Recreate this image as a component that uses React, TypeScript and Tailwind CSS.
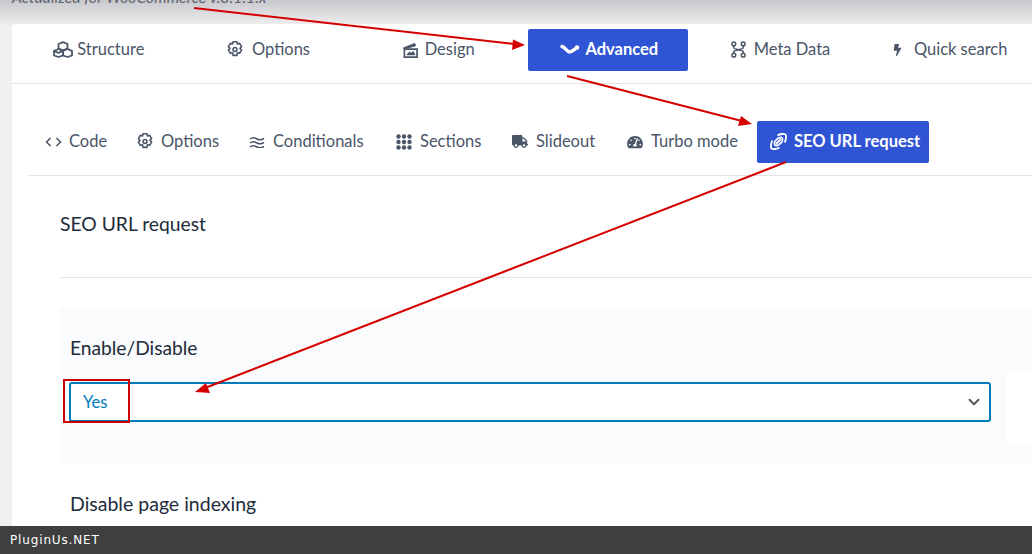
import React from 'react';
import { FaTruck, FaTachometerAlt, FaBolt } from 'react-icons/fa';
import { LuChevronDown } from 'react-icons/lu';

const font = 'font-["Lato","Noto_Sans",sans-serif]';

function CubesIcon() {
  return (
    <svg viewBox="0 0 20 17" className="w-[20px] h-[17px]" fill="none" stroke="currentColor" strokeWidth="1.800" strokeLinejoin="round">
      <path d="M10 1.200 14.500 3v4.500L10 9.300 5.500 7.500V3z" />
      <path d="M5.500 8 10 9.800v4.700L5.500 16 1 14.500V9.800z" />
      <path d="M14.500 8 19 9.800v4.700L14.500 16 10 14.500V9.800z" />
      <path d="M1 10 5.500 11.800 10 10" />
    </svg>
  );
}

function Gear() {
  return (
    <svg viewBox="1.200 0.300 13.600 15" className="w-[16px] h-[17px]" fill="none" stroke="currentColor" strokeWidth="1.400" strokeLinejoin="round">
      <path d="M6.300 1h3.400l.5 2 1.900-.6 1.700 2.900-1.400 1.500 1.400 1.500-1.700 2.900-1.900-.6-.5 2.400H6.300l-.5-2.400-1.900.6-1.700-2.900 1.400-1.500-1.400-1.500 1.700-2.900 1.900.6z" />
      <circle cx="8" cy="7.800" r="1.700" />
    </svg>
  );
}

function DesignIcon() {
  return (
    <svg viewBox="0 0 18 17" className="w-[17px] h-[16px]" fill="none" stroke="currentColor" strokeWidth="1.800">
      <path d="M2.500 7.500V16H16V7.500Z" />
      <path d="M1 6.500 13.500 1.500 14.500 4 2.500 7.500" fill="currentColor" strokeWidth="1" />
      <path d="M5 13l3-3 1.500 1.500L12 9.500l2 3.500v1H5z" fill="currentColor" stroke="none" />
    </svg>
  );
}

function AdvancedIcon() {
  return (
    <svg viewBox="0 0 20 11" className="w-[20px] h-[11px]" fill="none" stroke="currentColor" strokeWidth="3.400" strokeLinecap="round">
      <path d="M2 2.500C5 3 7 8 9.500 8 12 8 14 5.500 16 4.500" />
      <circle cx="17" cy="3.500" r="2.300" fill="currentColor" stroke="none" />
    </svg>
  );
}

function MetaIcon() {
  return (
    <svg viewBox="0 0 16 18" className="w-[15px] h-[17px]" fill="none" stroke="currentColor" strokeWidth="1.600">
      <circle cx="3" cy="3" r="2" />
      <circle cx="13" cy="3" r="2" />
      <circle cx="3" cy="15" r="2" />
      <circle cx="13" cy="15" r="2" />
      <path d="M3 5v2.500c0 1 10 2.500 10 3.500v2M13 5v2.500c0 1-10 2.500-10 3.500v2" />
    </svg>
  );
}

function CodeIcon() {
  return (
    <svg viewBox="0 0 17 10" className="w-[17px] h-[10px]" fill="none" stroke="currentColor" strokeWidth="1.500">
      <path d="M5.500 1 1.500 5l4 4M11.500 1l4 4-4 4" />
    </svg>
  );
}

function WavesIcon() {
  return (
    <svg viewBox="0 0 16 12" className="w-[16px] h-[12px]" fill="none" stroke="currentColor" strokeWidth="1.500">
      <path d="M1 3c2.500-2.500 4.500-1.500 7 0s4.500 1 7-.500M1 7c2.500-2.500 4.500-1.500 7 0s4.500 1 7-.500M1 11c2.500-2.500 4.500-1.500 7 0s4.500 1 7-.500" />
    </svg>
  );
}

function DotsIcon() {
  return (
    <svg viewBox="0 0 16 16" className="w-[16px] h-[16px]" fill="currentColor">
      {[2.5, 8, 13.5].map((y) =>
        [2.5, 8, 13.5].map((x) => <circle key={`${x}-${y}`} cx={x} cy={y} r="2.200" />),
      )}
    </svg>
  );
}

function LinkIcon() {
  return (
    <svg viewBox="0 0 17 17" className="w-[17px] h-[17px]" fill="none" stroke="currentColor" strokeWidth="1.800">
      <path d="M7.500 2.500C10 .800 14 .500 15.500 1.500c1 1.500.700 5.500-1 8" />
      <path d="M9.500 14.500C7 16.200 3 16.500 1.500 15.500c-1-1.500-.700-5.500 1-8" />
      <ellipse cx="8.500" cy="8.500" rx="5" ry="2.800" transform="rotate(-45 8.500 8.500)" />
      <path d="M6 11 11 6" />
    </svg>
  );
}

const topTabs = [
  { label: 'Structure', icon: <CubesIcon />, cls: 'gap-[4px]' },
  { label: 'Options', icon: <Gear />, cls: 'gap-[9px]' },
  { label: 'Design', icon: <DesignIcon />, cls: 'gap-[6px]' },
  { label: 'Advanced', icon: <AdvancedIcon />, cls: 'gap-[5px] pl-[3px]', active: true },
  { label: 'Meta Data', icon: <MetaIcon />, cls: 'gap-[8px] pl-[6px]' },
  { label: 'Quick search', icon: <FaBolt className="w-[9px] h-[12px]" />, cls: 'gap-[12px] pl-[6px]' },
];

const subTabs = [
  { label: 'Code', icon: <CodeIcon />, width: 'w-[92px]', gap: 'gap-[7px]' },
  { label: 'Options', icon: <Gear />, width: 'w-[112px]', gap: 'gap-2' },
  { label: 'Conditionals', icon: <WavesIcon />, width: 'w-[147px]', gap: 'gap-2' },
  { label: 'Sections', icon: <DotsIcon />, width: 'w-[116px]', gap: 'gap-2' },
  { label: 'Slideout', icon: <FaTruck className="w-[16px] h-[13px]" />, width: 'w-[115px]', gap: 'gap-2' },
  { label: 'Turbo mode', icon: <FaTachometerAlt className="w-[16px] h-[14px]" />, width: 'w-[129px]', gap: 'gap-2' },
];

function Arrows() {
  // annotation arrows drawn over the screenshot
  return (
    <svg className="absolute inset-0 z-10 pointer-events-none" width="1032" height="554" fill="none">
      <path d="M194 8 514 44" stroke="#d40000" strokeWidth="2" />
      <path d="M525 45 513 39.500 512 50z" fill="#d40000" />
      <path d="M567 76 742 121" stroke="#d40000" strokeWidth="2" />
      <path d="M752 124 741 116 738 126z" fill="#d40000" />
      <path d="M786 162 205 388" stroke="#d40000" strokeWidth="2" />
      <path d="M195 392 206 383 210 393z" fill="#d40000" />
    </svg>
  );
}

export default function App() {
  return (
    <div className={`${font} relative w-[1032px] h-[554px] overflow-hidden flex flex-col bg-[#f0f0f0]`}>
      <Arrows />
      <div className="flex-1 min-h-0 overflow-hidden bg-[linear-gradient(#c8c9cd_0px,#f0f0f0_26px)]">
        <div className="h-[24px] overflow-hidden pl-3">
          <p className="-mt-[11px] text-[15.8px] leading-[16px] italic text-[#5d6470]">Actualized for WooCommerce v.8.1.1.x</p>
        </div>
        <div className="ml-3 h-[600px] bg-white rounded-tl-[4px]">
          <div className="h-[60px] border-b border-[#e3e3e3] grid grid-cols-6 w-[1020px] pl-[2px] pt-[5px]">
            {topTabs.map((t) => (
              <div
                key={t.label}
                className={`mx-[5px] h-[42px] pb-px flex items-center justify-center rounded-[2px] text-[16.5px] ${t.cls} ${
                  t.active ? 'bg-[#2f55d4] text-white font-bold' : 'text-[#4a5568]'
                }`}
              >
                {t.icon}
                <span>{t.label}</span>
              </div>
            ))}
          </div>
          <div className="ml-4 h-[92px] border-b border-[#e3e3e3] flex items-start pt-[37px]">
            {subTabs.map((t) => (
              <div key={t.label} className={`${t.width} ${t.gap} shrink-0 h-[42px] pb-px pl-[17px] flex items-center text-[16.5px] text-[#4a5568]`}>
                {t.icon}
                <span className="whitespace-nowrap">{t.label}</span>
              </div>
            ))}
            <div className="ml-[18px] w-[172px] h-[42px] pb-px rounded-[2px] bg-[#2f55d4] text-white font-bold text-[16.5px] flex items-center pl-[13px] gap-[7px]">
              <LinkIcon />
              <span className="whitespace-nowrap">SEO URL request</span>
            </div>
          </div>
          <div className="pl-12">
            <h2 className="h-[102px] border-b border-[#e3e3e3] pt-[36px] text-[19.3px] leading-[24px] text-[#222b3a]">SEO URL request</h2>
            <div className="mt-[30px] h-[155px] bg-[#fafbfd] px-[9px] pt-[28px] flex gap-[15px] items-start">
              <div className="w-[922px] shrink-0">
                <p className="ml-px text-[19.2px] leading-[24px] text-[#222b3a]">Enable/Disable</p>
                <div className="relative mt-[22px] h-[40px] rounded-[3px] border-2 border-[#007cba] bg-white flex items-center justify-between pl-3 pr-[6px] text-[16.6px] text-[#007cba]">
                  <span>Yes</span>
                  <LuChevronDown className="w-[18px] h-[18px] text-[#555]" strokeWidth={2.6} />
                  <div className="absolute -left-[8px] -top-[5px] w-[67px] h-[44px] border-2 border-[#cc0000]" />
                </div>
              </div>
              <div className="mt-[35px] w-[40px] h-[72px] shrink-0 bg-white" />
            </div>
            <p className="mt-[29px] ml-[10px] text-[19.5px] leading-[24px] text-[#222b3a]">Disable page indexing</p>
          </div>
        </div>
      </div>
      <div className='relative z-20 h-[28px] shrink-0 bg-[#3f3f3f] pl-[10px] flex items-center text-[12px] tracking-[0.85px] text-white font-["DejaVu_Sans",sans-serif]'>
        PluginUs.NET
      </div>
    </div>
  );
}
